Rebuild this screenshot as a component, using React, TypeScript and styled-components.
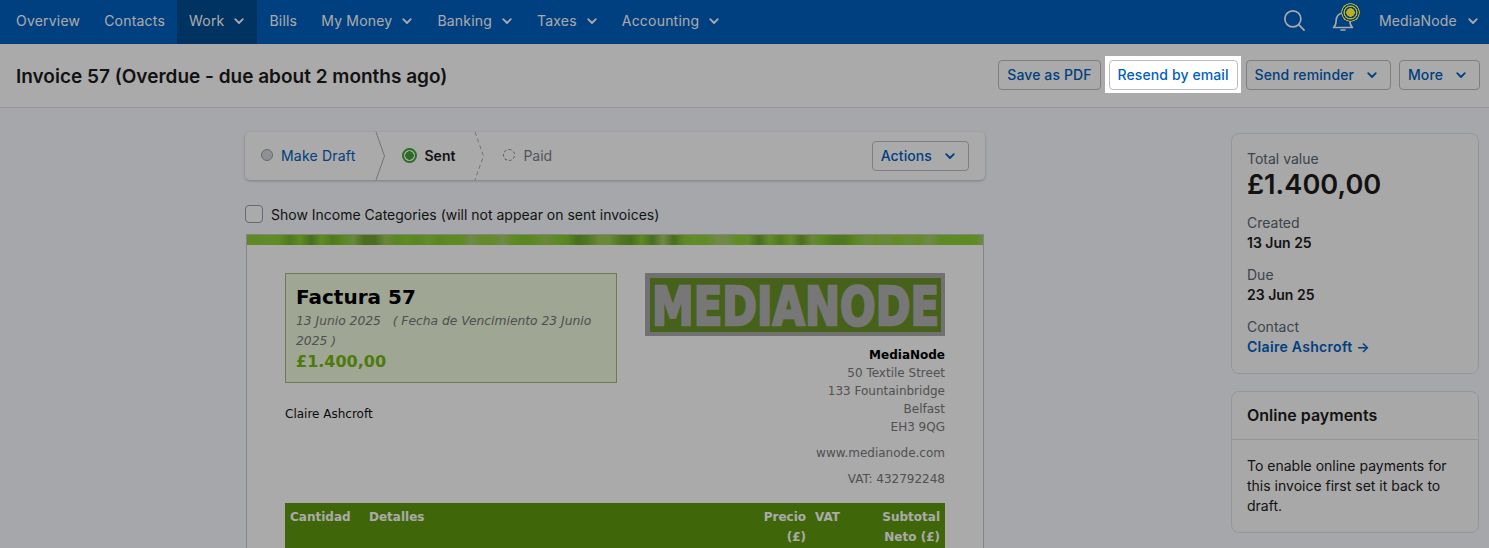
import React from 'react'
import styled, { createGlobalStyle } from 'styled-components'

const GlobalStyle = createGlobalStyle`
  html, body {
    margin: 0;
    height: 548px;
    overflow: hidden;
    background: #f8fbff;
    font-family: Inter, "Noto Sans", sans-serif;
    font-size: 14px;
    color: #1c1c1c;
  }
  * { box-sizing: border-box; }
`

const navItems = [
  { label: 'Overview' },
  { label: 'Contacts' },
  { label: 'Work', menu: true, active: true },
  { label: 'Bills' },
  { label: 'My Money', menu: true },
  { label: 'Banking', menu: true },
  { label: 'Taxes', menu: true },
  { label: 'Accounting', menu: true },
]

// banner strip on top of the invoice, soft bands of green
const stripeShades = ['#8ccf33', '#7ab52f', '#97d03f', '#86cb2e', '#a6cf68', '#6fa42e', '#8fd231', '#9ecd55']
const stripeStops = Array.from({ length: 70 })
  .map((_, i) => stripeShades[(i * 7 + (i * i) % 11) % stripeShades.length])
  .join(', ')

function Chevron({ size = 12 }: { size?: number }) {
  return (
    <svg width={size} height={size} viewBox="0 0 12 12" fill="none" stroke="currentColor" strokeWidth="1.8" strokeLinecap="round" strokeLinejoin="round">
      <path d="M2.2 4.2 6 8l3.8-3.8" />
    </svg>
  )
}

function Logo() {
  return (
    <LogoFrame>
      <svg width="291" height="54" viewBox="0 0 291 54">
        <rect width="291" height="54" fill="#6a9327" />
        <text
          x="2"
          y="46.500"
          textLength="287"
          lengthAdjust="spacingAndGlyphs"
          fontFamily='"DejaVu Sans", sans-serif'
          fontWeight="700"
          fontSize="53"
          fill="#b3b3b3"
          stroke="#b3b3b3"
          strokeWidth="2.500"
        >
          MEDIANODE
        </text>
      </svg>
    </LogoFrame>
  )
}

export default function App() {
  return (
    <>
      <GlobalStyle />
      <TopBar>
        <NavList>
          {navItems.map(item => (
            <NavItem key={item.label} $active={item.active}>
              {item.label}
              {item.menu && <Chevron />}
            </NavItem>
          ))}
        </NavList>
        <TopRight>
          <svg width="21" height="21" viewBox="1 1 22.500 22.500" fill="none" stroke="#fff" strokeWidth="1.800" strokeLinecap="round">
            <circle cx="10.500" cy="10.500" r="8.600" />
            <path d="m17 17 5.500 5.500" />
          </svg>
          <BellWrap>
            <svg width="24" height="24" viewBox="0 0 24 24" fill="none" stroke="#fff" strokeWidth="1.600" strokeLinecap="round" strokeLinejoin="round">
              <path d="M2.500 19.500c2-1.700 2.600-3.500 2.600-6.500 0-4.500 2.700-8 6.900-8s6.900 3.500 6.900 8c0 3 .6 4.800 2.600 6.500z" />
              <path d="M10 22h4" />
            </svg>
            <Pulse />
          </BellWrap>
          <AccountName>
            MediaNode
            <Chevron />
          </AccountName>
        </TopRight>
      </TopBar>

      <TitleBar>
        <Title>Invoice 57 (Overdue - due about 2 months ago)</Title>
        <TitleActions>
          <OutlineButton>Save as PDF</OutlineButton>
          <Spotlight>
            <OutlineButton>Resend by email</OutlineButton>
          </Spotlight>
          <OutlineButton>
            Send reminder
            <Chevron />
          </OutlineButton>
          <OutlineButton>
            More
            <Chevron />
          </OutlineButton>
        </TitleActions>
      </TitleBar>

      <Content>
        <MainArea>
          <MainColumn>
            <StepsBar>
              <Step $trail={19}>
                <GreyDot />
                <StepLink>Make Draft</StepLink>
              </Step>
              <svg width="10" height="48" viewBox="0 0 10 48" fill="none" stroke="#a9adb2">
                <path d="M1 0 9.500 24 1 48" />
              </svg>
              <Step $lead={17} $trail={19}>
                <SentDot />
                <StepCurrent>Sent</StepCurrent>
              </Step>
              <svg width="10" height="48" viewBox="0 0 10 48" fill="none" stroke="#a9adb2" strokeDasharray="4 3">
                <path d="M1 0 9.500 24 1 48" />
              </svg>
              <Step $lead={19}>
                <DashedDot />
                <StepMuted>Paid</StepMuted>
              </Step>
              <StepsActions>
                <OutlineButton>
                  Actions
                  <Chevron />
                </OutlineButton>
              </StepsActions>
            </StepsBar>

            <CheckRow>
              <CheckBox />
              Show Income Categories (will not appear on sent invoices)
            </CheckRow>

            <Invoice>
              <StripeBar />
              <InvoiceBody>
                <InvoiceTop>
                  <InvoiceLeft>
                    <SummaryBox>
                      <SummaryTitle>Factura 57</SummaryTitle>
                      <SummaryDates>13 Junio 2025 &nbsp; ( Fecha de Vencimiento 23 Junio 2025 )</SummaryDates>
                      <SummaryPrice>£1.400,00</SummaryPrice>
                    </SummaryBox>
                    <ClientName>Claire Ashcroft</ClientName>
                  </InvoiceLeft>
                  <InvoiceRight>
                    <Logo />
                    <AddressBlock>
                      <strong>MediaNode</strong>
                      <span>50 Textile Street</span>
                      <span>133 Fountainbridge</span>
                      <span>Belfast</span>
                      <span>EH3 9QG</span>
                    </AddressBlock>
                    <AddressLine>www.medianode.com</AddressLine>
                    <AddressLine>VAT: 432792248</AddressLine>
                  </InvoiceRight>
                </InvoiceTop>
                <LinesHead>
                  <span>Cantidad</span>
                  <span>Detalles</span>
                  <HeadRight>Precio (£)</HeadRight>
                  <VatHead>VAT</VatHead>
                  <HeadRight>Subtotal Neto (£)</HeadRight>
                </LinesHead>
              </InvoiceBody>
            </Invoice>
          </MainColumn>
        </MainArea>

        <Sidebar>
          <Card>
            <CardBody>
              <FactLabel>Total value</FactLabel>
              <TotalValue>£1.400,00</TotalValue>
              <FactLabel $spaced>Created</FactLabel>
              <FactValue>13 Jun 25</FactValue>
              <FactLabel $spaced>Due</FactLabel>
              <FactValue>23 Jun 25</FactValue>
              <FactLabel $spaced>Contact</FactLabel>
              <ContactLink>Claire Ashcroft →</ContactLink>
            </CardBody>
          </Card>
          <Card>
            <CardHead>Online payments</CardHead>
            <CardText>To enable online payments for this invoice first set it back to draft.</CardText>
          </Card>
        </Sidebar>
      </Content>
    </>
  )
}

const TopBar = styled.header`
  display: flex;
  justify-content: space-between;
  align-items: stretch;
  height: 44px;
  background: #0060c0;
  color: #fff;
`
const NavList = styled.nav`
  display: flex;
  padding-left: 4px;
`
const NavItem = styled.div<{ $active?: boolean }>`
  display: flex;
  align-items: center;
  gap: 9px;
  padding: 0 12px 4px;
  background: ${p => (p.$active ? '#004b94' : 'transparent')};
  font-size: 14px;
  letter-spacing: 0.2px;

  svg { margin-top: 2px; }
`
const TopRight = styled.div`
  display: flex;
  align-items: center;
  padding: 0 10px 4px;
`
const BellWrap = styled.div`
  position: relative;
  display: flex;
  margin: 0 24px 0 26px;
`
const Pulse = styled.span`
  position: absolute;
  z-index: 11;
  top: -5px;
  right: -5px;
  width: 19px;
  height: 19px;
  border-radius: 50%;
  background: radial-gradient(circle, #bfae1e 0 4px, #003f7f 4.500px 5.500px, #bfae1e 6px 6.800px, #003f7f 7.200px 8px, #bfae1e 8.400px 9.200px, transparent 9.500px);
`
const AccountName = styled.div`
  display: flex;
  align-items: center;
  gap: 10px;
  font-size: 14px;
  letter-spacing: 0.2px;

  svg { margin-top: 2px; }
`
const TitleBar = styled.div`
  display: flex;
  justify-content: space-between;
  align-items: center;
  height: 64px;
  padding: 0 9px 1px 16px;
  background: #fff;
  border-bottom: 1px solid #dfe3e8;
`
const Title = styled.h1`
  margin: 2px 0 0;
  font-size: 19px;
  font-weight: 600;
  color: #1c1c1c;
`
const TitleActions = styled.div`
  display: flex;
  align-items: center;
  gap: 8px;
`
const Spotlight = styled.div`
  position: relative;
  z-index: 10;
  display: flex;
  margin: -4px -3px -3px -4px;
  padding: 4px 3px 3px 4px;
  background: #fff;
  box-shadow: 0 0 0 3000px rgba(0, 0, 0, 0.335);
`
const OutlineButton = styled.button`
  display: flex;
  align-items: center;
  gap: 12px;
  height: 30px;
  padding: 0 8px 2px;
  background: #fff;
  border: 1px solid #b9bec4;
  border-radius: 4px;
  color: #0060c0;
  font-family: inherit;
  font-size: 14px;
  font-weight: 500;
  letter-spacing: 0.1px;

  svg {
    margin: 2px 4px 0 0;
  }
`
const Content = styled.main`
  display: flex;
  align-items: flex-start;
  padding-top: 24px;
`
const MainArea = styled.div`
  flex: 1;
  display: flex;
  justify-content: center;
  padding-right: 1px;
`
const MainColumn = styled.div`
  width: 740px;
`
const StepsBar = styled.div`
  display: flex;
  align-items: center;
  height: 48px;
  padding-left: 16px;
  background: #fff;
  border-radius: 5px;
  box-shadow: 0 1px 3px rgba(0, 0, 0, 0.25);
`
const Step = styled.div<{ $lead?: number; $trail?: number }>`
  display: flex;
  align-items: center;
  gap: 8px;
  padding: 0 ${p => p.$trail ?? 20}px 2px 0;
  margin-left: ${p => p.$lead ?? 0}px;
`
const GreyDot = styled.span`
  width: 12px;
  height: 12px;
  border-radius: 50%;
  background: #d5d9de;
  border: 1px solid #9aa0a7;
`
const SentDot = styled.span`
  width: 15px;
  height: 15px;
  border-radius: 50%;
  background: radial-gradient(circle, #3fa535 0 4px, #fff 4.500px);
  border: 2px solid #3fa535;
`
const DashedDot = styled.span`
  width: 12px;
  height: 12px;
  border-radius: 50%;
  border: 1px dashed #8a9097;
`
const StepLink = styled.span`
  color: #0060c0;
  letter-spacing: 0.2px;
`
const StepCurrent = styled.span`
  font-weight: 600;
  color: #1c1c1c;
`
const StepMuted = styled.span`
  color: #7c838a;
`
const StepsActions = styled.div`
  margin-left: auto;
  padding-right: 16px;
`
const CheckRow = styled.label`
  display: flex;
  align-items: center;
  gap: 8px;
  margin: 25px 0 11px;
  height: 18px;
  color: #1c1c1c;
`
const CheckBox = styled.span`
  width: 18px;
  height: 18px;
  background: #fff;
  border: 1px solid #9aa0a7;
  border-radius: 4px;
`
const Invoice = styled.div`
  width: 738px;
  margin-left: 1px;
  background: #fff;
  border: 1px solid #c4c8cd;
  font-family: "DejaVu Sans", Verdana, sans-serif;
  font-size: 12px;
`
const StripeBar = styled.div`
  height: 10px;
  background: linear-gradient(90deg, ${stripeStops});
`
const InvoiceBody = styled.div`
  padding: 28px 38px 40px;
`
const InvoiceTop = styled.div`
  display: flex;
  justify-content: space-between;
`
const InvoiceLeft = styled.div`
  width: 332px;
`
const SummaryBox = styled.div`
  height: 110px;
  padding: 11px 10px;
  background: #eff9df;
  border: 1px solid #a7b67e;
`
const SummaryTitle = styled.div`
  font-size: 20px;
  font-weight: 700;
  line-height: 24px;
  color: #000;
`
const SummaryDates = styled.div`
  margin-top: 2px;
  font-size: 12.3px;
  font-style: italic;
  line-height: 20px;
  color: #777;
`
const SummaryPrice = styled.div`
  font-size: 16px;
  font-weight: 700;
  line-height: 22px;
  color: #75b812;
`
const ClientName = styled.div`
  margin-top: 22px;
  line-height: 18px;
  color: #111;
`
const InvoiceRight = styled.div`
  width: 300px;
  display: flex;
  flex-direction: column;
  align-items: flex-end;
  color: #7a7a7a;
`
const LogoFrame = styled.div`
  display: flex;
  justify-content: center;
  align-items: center;
  width: 300px;
  height: 63px;
  background: #aaa;
  svg { display: block; overflow: visible; }
`
const AddressBlock = styled.div`
  display: flex;
  flex-direction: column;
  align-items: flex-end;
  margin: 10px 0 8px;
  line-height: 18px;
  strong { color: #000; }
`
const AddressLine = styled.div`
  line-height: 18px;
  margin-bottom: 8px;
`
const LinesHead = styled.div`
  display: grid;
  grid-template-columns: 74px 1fr 46px 54px 70px;
  column-gap: 5px;
  margin-top: 7px;
  padding: 4px 5px 3px;
  background: #5f9a0c;
  color: #fff;
  font-weight: 700;
  line-height: 20px;
`
const HeadRight = styled.span`
  text-align: right;
`
const VatHead = styled.span`
  padding-left: 4px;
`
const Sidebar = styled.aside`
  display: flex;
  flex-direction: column;
  gap: 17px;
  width: 248px;
  margin: 1px 10px 0 0;
`
const Card = styled.section`
  background: #fcfcfc;
  border: 1px solid #dfe3e8;
  border-radius: 8px;
`
const CardBody = styled.div`
  padding: 15px 15px 16px;
`
const FactLabel = styled.div<{ $spaced?: boolean }>`
  margin-top: ${p => (p.$spaced ? '12px' : '0')};
  line-height: 20px;
  color: #5a6672;
`
const TotalValue = styled.div`
  font-size: 27.2px;
  font-weight: 600;
  line-height: 32px;
  color: #1c1c1c;
`
const FactValue = styled.div`
  font-weight: 600;
  line-height: 20px;
`
const ContactLink = styled.a`
  display: block;
  font-weight: 600;
  line-height: 20px;
  letter-spacing: 0.3px;
  color: #0060c0;
`
const CardHead = styled.h2`
  margin: 0;
  padding: 13px 15px 14px;
  border-bottom: 1px solid #dfe3e8;
  font-size: 16px;
  font-weight: 600;
  line-height: 20px;
`
const CardText = styled.p`
  margin: 0;
  padding: 16px 15px 16px;
  line-height: 20px;
`
